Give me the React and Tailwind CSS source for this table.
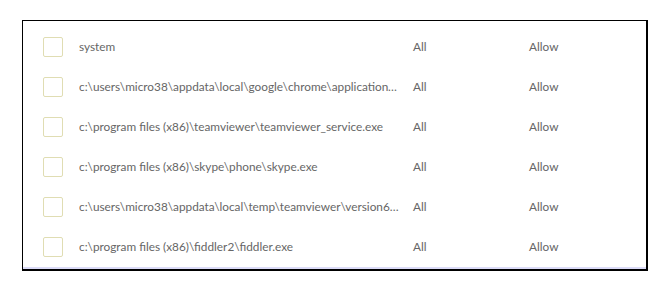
import React from 'react'

const rows = [
  'system',
  'c:\\users\\micro38\\appdata\\local\\google\\chrome\\application\\chrome.exe',
  'c:\\program files (x86)\\teamviewer\\teamviewer_service.exe',
  'c:\\program files (x86)\\skype\\phone\\skype.exe',
  'c:\\users\\micro38\\appdata\\local\\temp\\teamviewer\\version6\\teamviewer.exe',
  'c:\\program files (x86)\\fiddler2\\fiddler.exe',
]

export default function App() {
  return (
    <div className="w-[671px] h-[292px] bg-white pt-5 pl-[22px]" style={{ fontFamily: 'Lato, sans-serif' }}>
      <div className="w-[626px] h-[251px] border-t border-l border-r-2 border-b-2 border-black flex flex-col">
        <div className="pt-[6px] flex-1">
          {rows.map((path, i) => (
            <div key={i} className="h-10 flex items-center text-[11.8px] text-[#666]">
              <div className="w-5 h-5 ml-5 rounded-[2px] border border-[#e0ddb3] shrink-0" />
              <div className="ml-4 w-[322px] truncate">{path}</div>
              <div className="ml-3 w-[116px]">All</div>
              <div>Allow</div>
            </div>
          ))}
        </div>
        <div className="h-[2px] bg-[#dcdcf8]" />
      </div>
    </div>
  )
}
